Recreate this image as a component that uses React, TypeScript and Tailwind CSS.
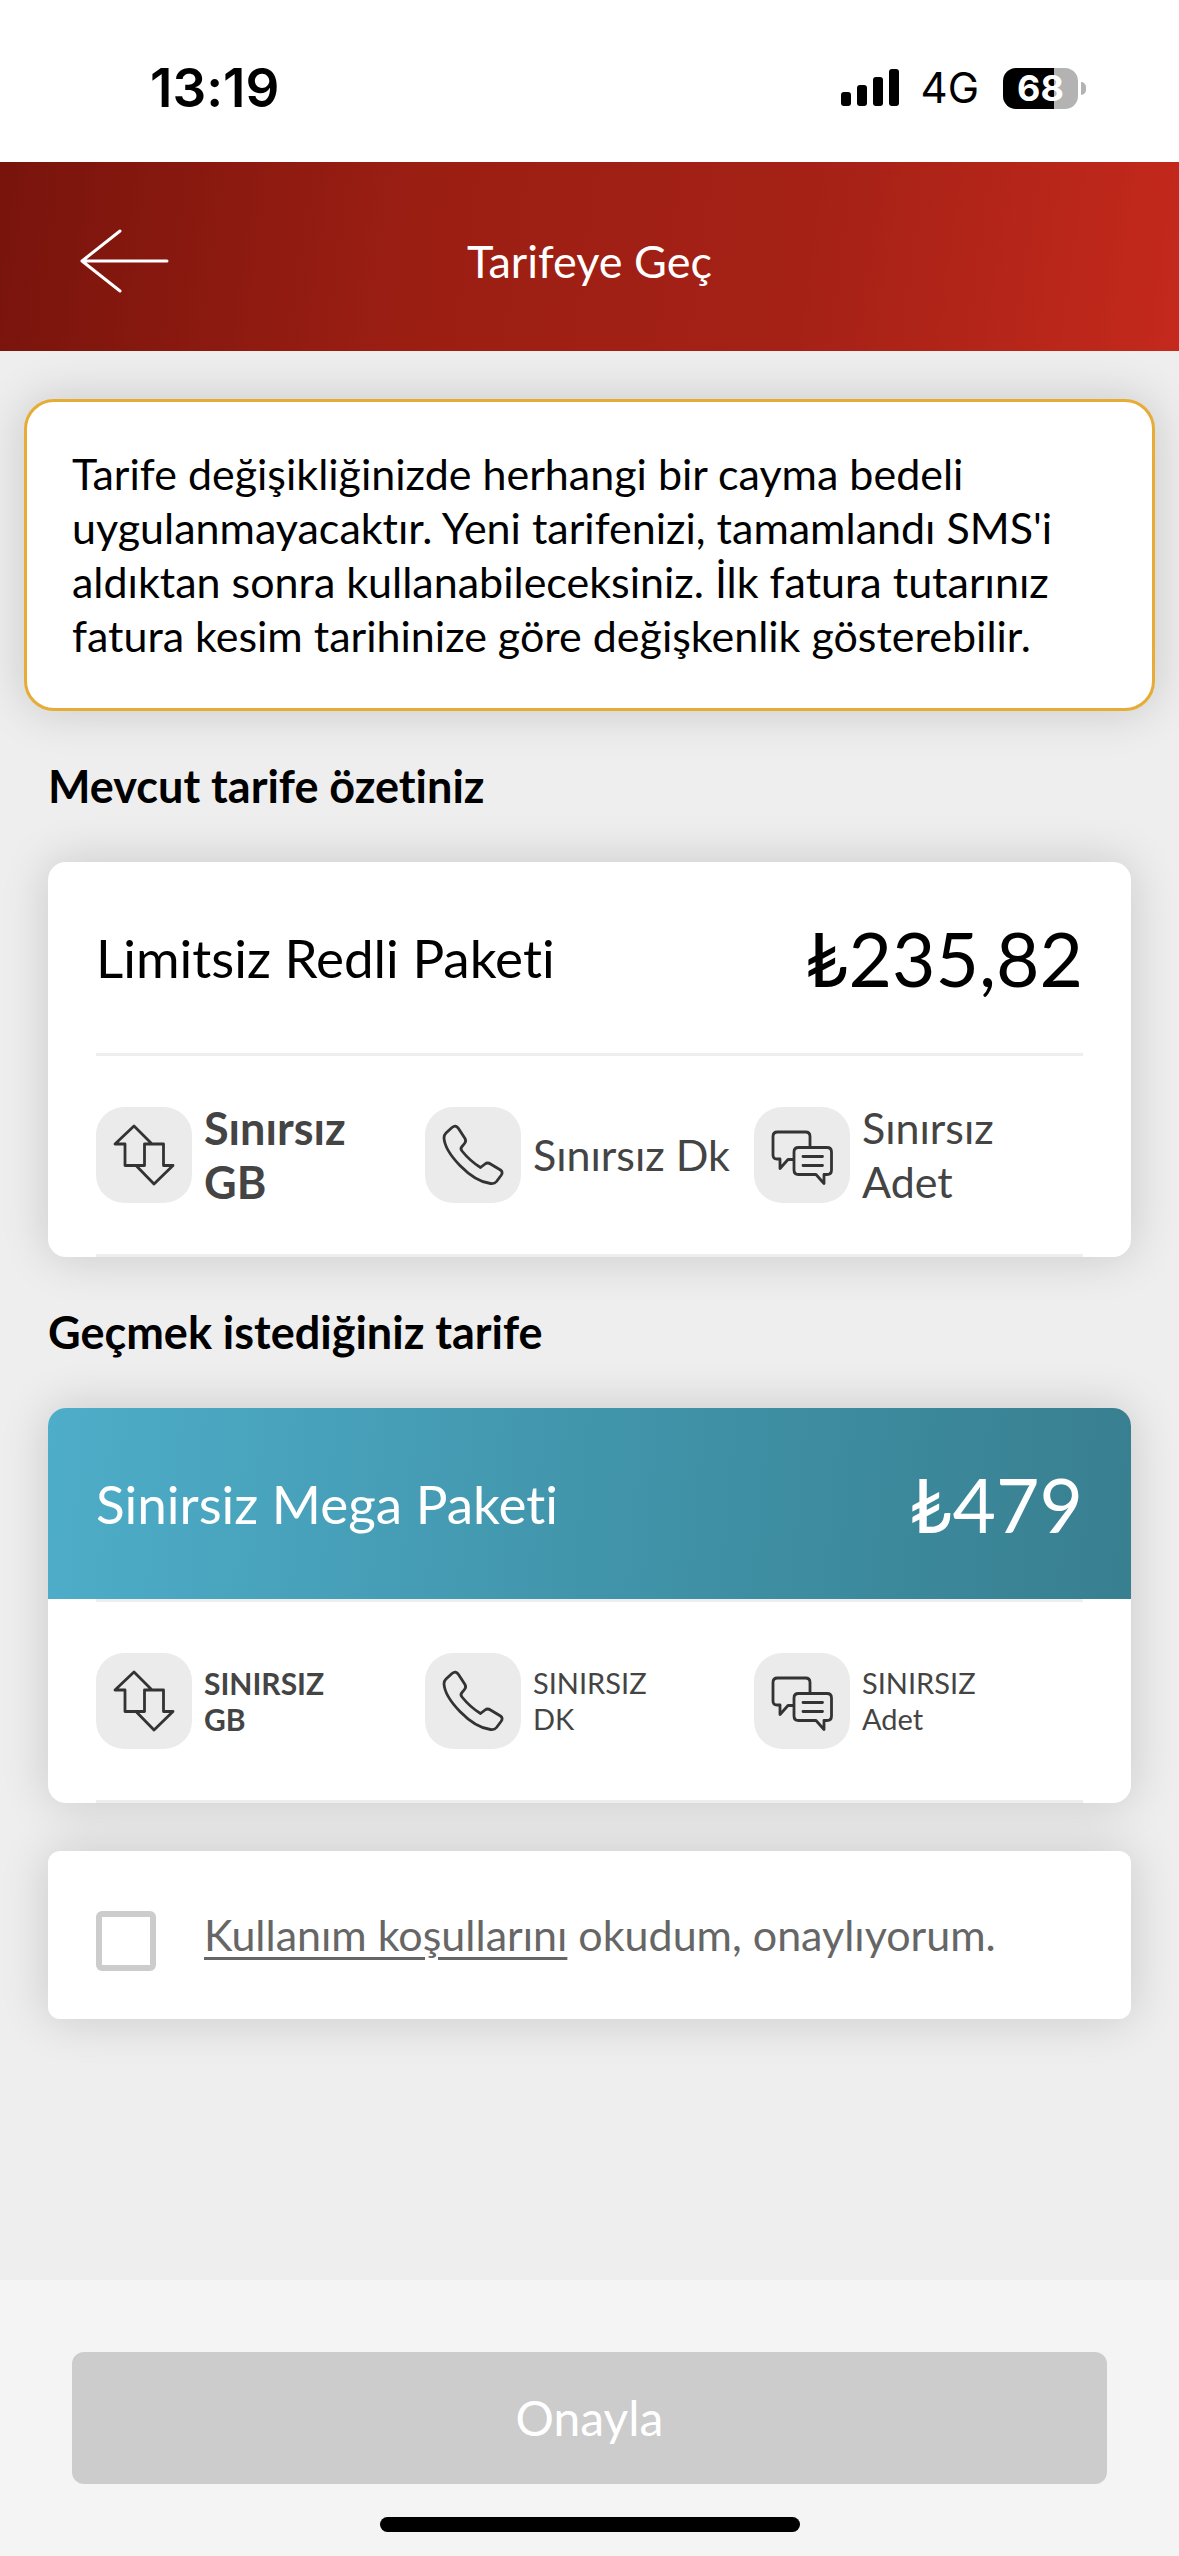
import { useState } from "react";

type IconName = "data" | "call" | "sms";

type Benefit = {
  icon: IconName;
  text: string;
  bold?: boolean;
};

const currentBenefits: Benefit[] = [
  { icon: "data", text: "Sınırsız\nGB", bold: true },
  { icon: "call", text: "Sınırsız Dk" },
  { icon: "sms", text: "Sınırsız\nAdet" },
];

const targetBenefits: Benefit[] = [
  { icon: "data", text: "SINIRSIZ\nGB", bold: true },
  { icon: "call", text: "SINIRSIZ\nDK" },
  { icon: "sms", text: "SINIRSIZ\nAdet" },
];

const iconPaths: Record<IconName, string[]> = {
  data: [
    "M56 37 L38 19 L19 37 H29 V58.5 H48.5 V37 H67.5 V58.5 H77 L58 77 L40 58.5",
  ],
  call: [
    "M21 26 L27 20.5 Q31 17.5 33.5 21.5 L40 31.5 Q41.5 34 39.5 36.5 L37 39.5 Q35 41.5 37 44 Q45 54 55.5 60.5 L60 57 Q62.5 55 65.5 57 L75.5 63 Q78.5 65 76 68.5 L71.5 74.5 Q69.5 77 65.5 76.5 C45 74 20 46 19 31 Q19 28 21 26 Z",
  ],
  sms: [
    "M56 39 V29.5 Q56 25 51.5 25 H23.5 Q19 25 19 29.5 V48 Q19 52 23 52 H26 V61.5 L34 52.5 H39",
    "M44.5 40.5 H73 Q77.5 40.5 77.5 45 V63 Q77.5 67.5 73 67.5 H70 V76.5 L62 67.5 H44.5 Q40 67.5 40 63 V45 Q40 40.5 44.5 40.5 Z",
    "M49 49.5 H68.5 M49 58.5 H68.5",
  ],
};

function BenefitIcon({ name }: { name: IconName }) {
  return (
    <span className="size-24 shrink-0 rounded-[28px] bg-[#ebebeb]">
      <svg
        viewBox="0 0 96 96"
        fill="none"
        stroke="#333333"
        strokeWidth="2.8"
        strokeLinecap="round"
        strokeLinejoin="round"
        className="size-24"
        aria-hidden="true"
      >
        {iconPaths[name].map((d) => (
          <path key={d} d={d} />
        ))}
      </svg>
    </span>
  );
}

function StatusBar() {
  return (
    <div className="flex h-[162px] items-center bg-white pt-[14px] pr-[93px] pl-[150px] font-['Inter',sans-serif] text-black">
      <span className="flex-1 text-[53px] leading-[60px] font-semibold">13:19</span>
      <svg viewBox="0 0 58 38" className="h-[38px] w-[58px]" aria-hidden="true">
        <rect x="0" y="23" width="10" height="14" rx="3" />
        <rect x="16" y="16" width="10" height="21" rx="3" />
        <rect x="32" y="8" width="10" height="29" rx="3" />
        <rect x="48" y="0" width="10" height="37" rx="3" />
      </svg>
      <span className="ml-[22px] text-[42px] leading-[60px]">4G</span>
      <div className="ml-6 flex items-center gap-[3px]">
        <span className="flex h-[41px] w-[75px] items-center justify-center rounded-[13px] bg-linear-to-r from-black from-68% to-[#b3b3b3] to-68% text-[36px] leading-[41px] font-bold text-white">
          68
        </span>
        <span className="h-[13px] w-[5px] rounded-r-full bg-[#b3b3b3]" />
      </div>
    </div>
  );
}

function benefitTextClass(bold?: boolean, small?: boolean) {
  if (small) {
    return bold ? "text-[30px] leading-[36px] font-bold" : "text-[29px] leading-[36px]";
  }
  return bold ? "text-[45px] leading-[54px] font-bold" : "text-[43px] leading-[54px]";
}

function BenefitList({ items, small }: { items: Benefit[]; small?: boolean }) {
  return (
    <ul className="mx-12 grid grid-cols-3 border-y-[3px] border-[#eeeeee] py-[51px]">
      {items.map((item) => (
        <li key={item.icon} className="flex h-24 items-center gap-3 text-[#444444]">
          <BenefitIcon name={item.icon} />
          <span className={`whitespace-pre-line ${benefitTextClass(item.bold, small)}`}>
            {item.text}
          </span>
        </li>
      ))}
    </ul>
  );
}

type TariffCardProps = {
  name: string;
  price: string;
  benefits: Benefit[];
  highlighted?: boolean;
};

function TariffCard({ name, price, benefits, highlighted }: TariffCardProps) {
  return (
    <article className="mx-12 overflow-hidden rounded-[18px] bg-white shadow-[0_0_48px_rgba(0,0,0,0.16)]">
      <div
        className={`flex h-[191px] items-center justify-between px-12 ${
          highlighted
            ? "bg-linear-[95deg,#4eadc9,#4195ab_50%,#387f90] text-white"
            : "text-black"
        }`}
      >
        <h3 className="text-[53px] leading-[64px]">{name}</h3>
        <p className="text-[75px] leading-[88px]">{price}</p>
      </div>
      <BenefitList items={benefits} small={highlighted} />
    </article>
  );
}

export default function App() {
  const [accepted, setAccepted] = useState(false);

  return (
    <div className="flex min-h-screen flex-col bg-[#eeeeee] font-['Lato',sans-serif] [font-variant-ligatures:none]">
      <StatusBar />

      <header className="grid h-[189px] grid-cols-[1fr_auto_1fr] items-center bg-linear-[98deg,#78140c,#9b1e13_35%,#a52116_68%,#c4291c] px-[78px] pt-2 text-white">
        <button type="button" aria-label="Geri" className="w-[93px]">
          <svg
            viewBox="0 0 93 66"
            fill="none"
            stroke="currentColor"
            strokeWidth="3"
            strokeLinecap="round"
            strokeLinejoin="round"
            className="h-[66px] w-[93px]"
          >
            <path d="M89 33 H4 M42 3 L4 33 L42 63" />
          </svg>
        </button>
        <h1 className="text-[45px] leading-[60px]">Tarifeye Geç</h1>
      </header>

      <main className="flex-1 pb-12">
        <p className="mx-6 mt-12 rounded-[30px] border-[3px] border-[#e6ac36] bg-white p-[45px] text-[43px] leading-[54px] text-black shadow-[0_0_48px_rgba(0,0,0,0.16)]">
          Tarife değişikliğinizde herhangi bir cayma bedeli uygulanmayacaktır.
          Yeni tarifenizi, tamamlandı SMS'i aldıktan sonra kullanabileceksiniz.
          İlk fatura tutarınız fatura kesim tarihinize göre değişkenlik
          gösterebilir.
        </p>

        <h2 className="mx-12 my-12 text-[45px] leading-[55px] font-bold text-black">
          Mevcut tarife özetiniz
        </h2>
        <TariffCard
          name="Limitsiz Redli Paketi"
          price="₺235,82"
          benefits={currentBenefits}
        />

        <h2 className="mx-12 my-12 text-[45px] leading-[55px] font-bold text-black">
          Geçmek istediğiniz tarife
        </h2>
        <TariffCard
          name="Sinirsiz Mega Paketi"
          price="₺479"
          benefits={targetBenefits}
          highlighted
        />

        <div className="mx-12 mt-12 flex h-[168px] items-center rounded-xl bg-white px-12 shadow-[0_0_48px_rgba(0,0,0,0.16)]">
          <input
            id="terms"
            type="checkbox"
            checked={accepted}
            onChange={(e) => setAccepted(e.target.checked)}
            className="mt-3 size-[60px] shrink-0 appearance-none rounded-md border-6 border-[#cccccc] bg-white checked:bg-[#cccccc]"
          />
          <label htmlFor="terms" className="ml-12 text-[43px] leading-[54px] text-[#666666]">
            <a href="#terms" className="underline decoration-[3px] underline-offset-[6px]">
              Kullanım koşullarını
            </a>{" "}
            okudum, onaylıyorum.
          </label>
        </div>
      </main>

      <footer className="bg-[#f4f4f4] px-[72px] pt-[72px] pb-6">
        <button
          type="button"
          disabled={!accepted}
          className="h-[132px] w-full rounded-xl bg-[#e60000] text-[48px] leading-[60px] text-white disabled:bg-[#cccccc]"
        >
          Onayla
        </button>
        <div className="mx-auto mt-[33px] h-[15px] w-[420px] rounded-full bg-black" />
      </footer>
    </div>
  );
}
